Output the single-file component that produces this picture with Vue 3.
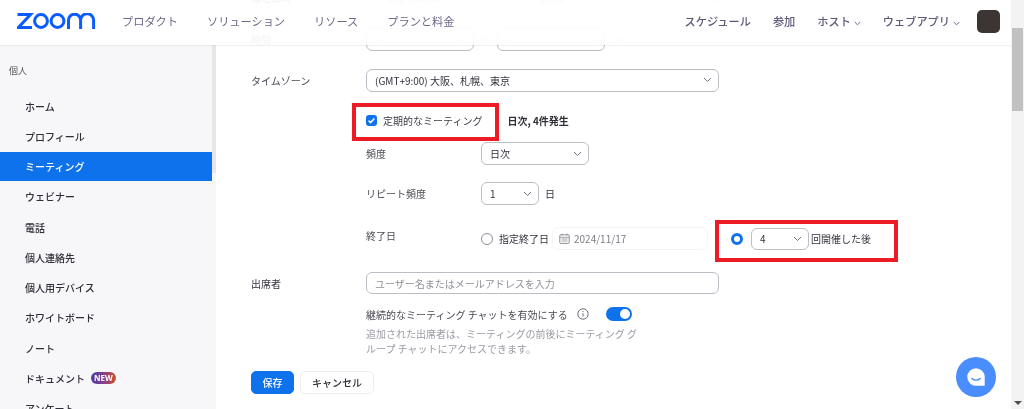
<template>
  <div class="page">
    <header class="topbar">
      <svg class="logo" viewBox="0 0 80 16" width="80" height="16" fill="none" stroke="#0b5cff" stroke-width="3">
        <path d="M0.5 1.6H13.5L1.5 14.4H15" />
        <circle cx="24" cy="8" r="6.4" />
        <circle cx="40.5" cy="8" r="6.4" />
        <path d="M51.5 16V7.2A5.8 5.8 0 0 1 63.6 7.2V16M63.6 7.2A5.8 5.8 0 0 1 76.6 7.2V16" />
      </svg>
      <nav class="nav-left">
        <a v-for="item in leftNav" :key="item">{{ item }}</a>
      </nav>
      <nav class="nav-right">
        <a>スケジュール</a>
        <a>参加</a>
        <a class="has-menu">ホスト<svg width="7" height="5" viewBox="0 0 7 5" fill="none" stroke="#6b6889"><path d="M.7 1l2.8 2.8L6.3 1" /></svg></a>
        <a class="has-menu">ウェブアプリ<svg width="7" height="5" viewBox="0 0 7 5" fill="none" stroke="#6b6889"><path d="M.7 1l2.8 2.8L6.3 1" /></svg></a>
        <span class="avatar"></span>
      </nav>
    </header>

    <aside class="sidebar">
      <div class="side-list">
        <div class="side-title">個人</div>
        <a v-for="item in sideItems" :key="item.name" class="side-item" :class="{ active: item.active }">
          {{ item.name }}<span v-if="item.badge" class="badge">NEW</span>
        </a>
      </div>
      <div class="side-thumb"></div>
    </aside>

    <main class="content">
      <div class="row row-date">
        <label class="label">開始日時</label>
        <div class="select w-date faded"><span class="cal-text">2024/11/02</span></div>
        <div class="select w-time faded"><span>12:30</span></div>
        <div class="select w-ampm faded"><span>PM</span></div>
      </div>

      <div class="row row-duration">
        <label class="label">時間</label>
        <div class="select w-dur"><span class="faint">6</span><svg class="chev" width="9" height="6" viewBox="0 0 9 6" fill="none" stroke="#d5d5da"><path d="M1 1l3.5 3.5L8 1" /></svg></div>
        <span class="unit">時</span>
        <div class="select w-dur"><span class="faint">0</span><svg class="chev" width="9" height="6" viewBox="0 0 9 6" fill="none" stroke="#d5d5da"><path d="M1 1l3.5 3.5L8 1" /></svg></div>
        <span class="unit">分</span>
      </div>

      <div class="row row-zone">
        <label class="label">タイムゾーン</label>
        <div class="select w-full">
          <span>(GMT+9:00) 大阪、札幌、東京</span>
          <svg class="chev" width="9" height="6" viewBox="0 0 9 6" fill="none" stroke="#6e7680"><path d="M1 1l3.5 3.5L8 1" /></svg>
        </div>
      </div>

      <div class="indent row-recurring">
        <span class="checkbox">
          <svg width="9" height="9" viewBox="0 0 9 9" fill="none" stroke="#fff" stroke-width="1.5"><path d="M1.6 4.6l2 2 3.8-4" /></svg>
        </span>
        <span class="check-label">定期的なミーティング</span>
        <strong class="summary">日次, 4件発生</strong>
      </div>

      <div class="indent sub-row row-freq">
        <label class="sub-label">頻度</label>
        <div class="select w-freq">
          <span>日次</span>
          <svg class="chev" width="9" height="6" viewBox="0 0 9 6" fill="none" stroke="#6e7680"><path d="M1 1l3.5 3.5L8 1" /></svg>
        </div>
      </div>

      <div class="indent sub-row row-repeat">
        <label class="sub-label">リピート頻度</label>
        <div class="select w-small">
          <span>1</span>
          <svg class="chev" width="9" height="6" viewBox="0 0 9 6" fill="none" stroke="#6e7680"><path d="M1 1l3.5 3.5L8 1" /></svg>
        </div>
        <span class="day-unit">日</span>
      </div>

      <div class="indent sub-row row-end">
        <label class="sub-label end-label">終了日</label>
        <span class="radio"></span>
        <span class="radio-text">指定終了日</span>
        <div class="date-box">
          <svg width="11" height="11" viewBox="0 0 11 11" fill="none" stroke="#8d8d96"><rect x=".8" y="1.8" width="9.4" height="8.6" rx="1" /><path d="M.8 4.3h9.4M3 .5v2M8 .5v2M2.5 6h6M2.5 8h6" stroke-width=".8" /></svg>
          <span>2024/11/17</span>
        </div>
        <span class="radio on"></span>
        <div class="select w-small count">
          <span>4</span>
          <svg class="chev" width="9" height="6" viewBox="0 0 9 6" fill="none" stroke="#6e7680"><path d="M1 1l3.5 3.5L8 1" /></svg>
        </div>
        <span class="after-text">回開催した後</span>
      </div>

      <div class="row row-attendee">
        <label class="label dark">出席者</label>
        <input class="attendee" placeholder="ユーザー名またはメールアドレスを入力" />
      </div>

      <div class="indent row-chat">
        <span class="chat-text">継続的なミーティング チャットを有効にする</span>
        <svg class="info" width="12" height="12" viewBox="0 0 12 12" fill="none" stroke="#6e6e78"><circle cx="6" cy="6" r="5.2" /><path d="M6 5.2v3.4" /><path d="M6 3v1.1" /></svg>
        <span class="toggle"><span class="knob"></span></span>
      </div>
      <p class="indent help">追加された出席者は、ミーティングの前後にミーティング グ<br />ループ チャットにアクセスできます。</p>

      <div class="actions">
        <button class="btn primary">保存</button>
        <button class="btn">キャンセル</button>
      </div>
    </main>

    <div class="scrollbar">
      <div class="thumb"></div>
      <span class="arrow"></span>
    </div>

    <div class="mark mark-check"></div>
    <div class="mark mark-count"></div>

    <div class="chat-fab">
      <svg width="22" height="22" viewBox="0 0 24 24"><path d="M12 2.5a9.5 9.5 0 1 0 0 19h9.5V12A9.5 9.5 0 0 0 12 2.5z" fill="#fff" /><path d="M7.4 13.6c2.4 2.4 6.8 2.4 9.2 0" fill="none" stroke="#4a8dff" stroke-width="1.5" stroke-linecap="round" /></svg>
    </div>
  </div>
</template>

<script setup>
const leftNav = ['プロダクト', 'ソリューション', 'リソース', 'プランと料金']

const sideItems = [
  { name: 'ホーム' },
  { name: 'プロフィール' },
  { name: 'ミーティング', active: true },
  { name: 'ウェビナー' },
  { name: '電話' },
  { name: '個人連絡先' },
  { name: '個人用デバイス' },
  { name: 'ホワイトボード' },
  { name: 'ノート' },
  { name: 'ドキュメント', badge: true },
  { name: 'アンケート' }
]
</script>

<style>
html,
body {
  margin: 0;
  overflow: hidden;
  background: #fff;
}
</style>

<style scoped>
.page {
  position: relative;
  display: flex;
  width: 1024px;
  height: 409px;
  overflow: hidden;
  background: #fff;
  font-family: "Noto Sans CJK JP", "Noto Sans", sans-serif;
  font-size: 10px;
  color: #33333f;
  filter: blur(0.4px);
}

/* header floats over the scrolled form */
.topbar {
  position: absolute;
  top: 0;
  left: 0;
  right: 13px;
  z-index: 3;
  display: flex;
  align-items: center;
  height: 45px;
  padding: 0 11px 3px 17px;
  box-sizing: border-box;
  background: rgba(255, 255, 255, 0.93);
  box-shadow: 0 1px 1px rgba(0, 0, 0, 0.05);
}

.logo {
  flex-shrink: 0;
}

.nav-left {
  display: flex;
  gap: 29px;
  margin-left: 25px;
  font-size: 11.2px;
  color: #6b6889;
}

.nav-right {
  display: flex;
  align-items: center;
  margin-left: auto;
  gap: 22px;
  font-size: 11.2px;
  font-weight: 500;
  color: #5c5979;
}

.has-menu svg {
  margin-left: 3px;
  vertical-align: 0;
}

.avatar {
  width: 23px;
  height: 23px;
  margin-left: -5px;
  border-radius: 5px;
  background: #3c3533;
}

.sidebar {
  display: flex;
  flex-shrink: 0;
  width: 216px;
  height: 409px;
  padding-top: 45px;
  box-sizing: border-box;
  background: #f7f7fa;
}

.side-list {
  width: 212px;
}

.side-title {
  height: 46.5px;
  padding: 19px 0 0 9px;
  box-sizing: border-box;
  font-size: 9px;
  line-height: 14px;
  color: #55555f;
}

.side-item {
  display: flex;
  align-items: center;
  height: 29px;
  margin-bottom: 1.25px;
  padding-left: 25px;
  font-weight: 500;
  color: #2e2e38;
}

.side-item.active {
  background: #0e72ed;
  color: #fff;
}

.badge {
  margin-left: 6px;
  padding: 0 3px;
  height: 12px;
  line-height: 12px;
  border-radius: 6px;
  font-size: 8px;
  font-weight: 700;
  font-family: "Noto Sans", sans-serif;
  color: #fff;
  background: linear-gradient(90deg, #4a3aa8, #8d3f88 55%, #d4511c);
}

.side-thumb {
  width: 4px;
  height: 128px;
  background: #e7e7e9;
}

.content {
  flex: 1;
  min-width: 0;
  padding-left: 35px;
}

.row {
  display: flex;
  align-items: center;
}

.label {
  flex-shrink: 0;
  width: 115px;
  color: #4a4a55;
}

.label.dark {
  color: #33333f;
}

.select {
  display: flex;
  align-items: center;
  justify-content: space-between;
  flex-shrink: 0;
  height: 22.5px;
  padding: 0 6.5px 0 8px;
  box-sizing: border-box;
  border: 1px solid #bdbdc6;
  border-radius: 6px;
  background: #fff;
  color: #33333f;
}

.faded {
  border-color: #ececf0;
  color: #9a9aa2;
}

.faint {
  color: #d8d8dd;
}

.row-date {
  margin-top: -14px;
}

.w-date {
  width: 158px;
}

.w-time {
  width: 162px;
  margin-left: 6px;
}

.w-ampm {
  width: 69px;
  margin-left: 7px;
}

.cal-text {
  padding-left: 14px;
}

.row-duration {
  margin-top: 19.5px;
}

.w-dur {
  width: 108px;
}

.unit {
  width: 23px;
  padding-left: 7px;
  box-sizing: border-box;
  color: #c9c9cf;
}

.row-zone {
  margin-top: 18.5px;
}

.w-full {
  width: 353px;
}

.indent {
  margin-left: 115px;
}

.row-recurring {
  display: flex;
  align-items: center;
  height: 22px;
  margin-top: 17.5px;
}

.checkbox {
  display: flex;
  align-items: center;
  justify-content: center;
  width: 11px;
  height: 11px;
  border-radius: 3px;
  background: #0e72ed;
}

.check-label {
  margin-left: 6px;
  color: #3d3d48;
}

.summary {
  margin-left: 25px;
  font-weight: 700;
  color: #2e2e38;
}

.sub-row {
  display: flex;
  align-items: center;
}

.sub-label {
  flex-shrink: 0;
  width: 115px;
  color: #4a4a55;
}

.w-freq {
  width: 108px;
}

.w-small {
  width: 58px;
}

.row-freq {
  margin-top: 11.3px;
}

.row-repeat {
  margin-top: 17.5px;
}

.day-unit {
  margin-left: 6px;
}

.row-end {
  margin-top: 22.2px;
  height: 24px;
}

.end-label {
  margin-top: -6px;
}

.radio {
  flex-shrink: 0;
  width: 12px;
  height: 12px;
  box-sizing: border-box;
  border: 1px solid #8d8d96;
  border-radius: 50%;
}

.radio.on {
  margin-left: 23px;
  border: 3.5px solid #0e72ed;
}

.radio-text {
  margin-left: 6px;
}

.date-box {
  display: flex;
  align-items: center;
  gap: 4px;
  width: 156px;
  height: 23px;
  margin-left: 3px;
  padding-left: 6px;
  box-sizing: border-box;
  border: 1px solid #f5f5f7;
  border-radius: 6px;
  color: #7d7d86;
}

.count {
  margin-left: 8px;
}

.after-text {
  margin-left: 2px;
}

.row-attendee {
  margin-top: 21px;
}

.attendee {
  width: 353px;
  height: 22.5px;
  padding: 0 8px;
  box-sizing: border-box;
  border: 1px solid #bdbdc6;
  border-radius: 6px;
  outline: none;
  font: inherit;
}

.attendee::placeholder {
  color: #8f8f98;
}

.row-chat {
  display: flex;
  align-items: center;
  height: 14px;
  margin-top: 13px;
}

.chat-text {
  color: #4a4a55;
}

.info {
  margin-left: 9px;
}

.toggle {
  display: flex;
  justify-content: flex-end;
  align-items: center;
  width: 26px;
  height: 14px;
  margin-left: 17px;
  padding-right: 2px;
  box-sizing: border-box;
  border-radius: 7px;
  background: #0e72ed;
}

.knob {
  width: 10px;
  height: 10px;
  border-radius: 50%;
  background: #fff;
}

.help {
  margin-top: 4.3px;
  margin-bottom: 0;
  line-height: 15px;
  color: #9a9aa5;
}

.actions {
  display: flex;
  gap: 6px;
  margin-top: 15px;
}

.btn {
  height: 23.3px;
  padding: 0 11px;
  border: 1px solid #eeeef1;
  border-radius: 5px;
  background: #fff;
  font: inherit;
  font-weight: 500;
  color: #2e2e38;
}

.btn.primary {
  padding: 0 10.5px;
  border-color: #0e72ed;
  background: #0e72ed;
  color: #fff;
}

.scrollbar {
  display: flex;
  flex-direction: column;
  justify-content: space-between;
  align-items: center;
  flex-shrink: 0;
  width: 13px;
  height: 409px;
  padding: 28px 0 4px;
  box-sizing: border-box;
  background: #f3f3f3;
}

.thumb {
  width: 11px;
  height: 83px;
  background: #c1c1c1;
}

.arrow {
  width: 0;
  height: 0;
  border-left: 4px solid transparent;
  border-right: 4px solid transparent;
  border-top: 4px solid #505050;
}

/* red annotation boxes sit on top of the form */
.mark {
  position: absolute;
  z-index: 2;
  box-sizing: border-box;
  border: 4px solid #ed1c24;
}

.mark-check {
  left: 352px;
  top: 103px;
  width: 147px;
  height: 37.5px;
}

.mark-count {
  left: 714.5px;
  top: 219.5px;
  width: 183px;
  height: 42.5px;
}

.chat-fab {
  position: absolute;
  z-index: 2;
  left: 956px;
  top: 357px;
  display: flex;
  align-items: center;
  justify-content: center;
  width: 40px;
  height: 40px;
  border-radius: 50%;
  background: #4a8dff;
}
</style>
